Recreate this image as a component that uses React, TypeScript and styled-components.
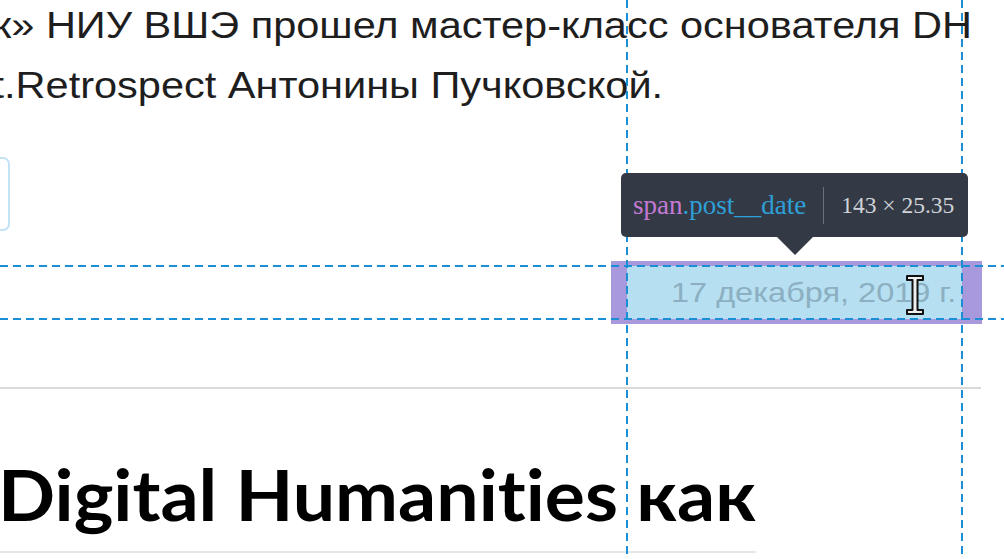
import React from "react";
import styled, { createGlobalStyle } from "styled-components";

const Global = createGlobalStyle`
  html, body { margin: 0; padding: 0; background: #ffffff; overflow: hidden; }
  #root { width: 1004px; height: 559px; }
`;

const Page = styled.div`
  position: relative;
  width: 1004px;
  height: 559px;
  overflow: hidden;
  background: #ffffff;
`;

const Column = styled.article`
  margin-left: -41px;
  width: 1023px;
  display: flex;
  flex-direction: column;
  align-items: flex-start;
`;

const Lead = styled.p`
  margin: -4px 0 0 -8px;
  font-family: "Liberation Sans", Arial, sans-serif;
  font-size: 36px;
  line-height: 60px;
  color: #1e1e1e;
  white-space: nowrap;
  transform: scaleX(1.153);
  transform-origin: 0 0;
`;

const Footer = styled.div`
  margin-top: 41px;
  width: 100%;
  display: flex;
  flex-direction: column;
`;

const ShareButton = styled.button`
  width: 51px;
  height: 74px;
  padding: 0;
  background: #ffffff;
  border: 2px solid #c4e2f6;
  border-radius: 7px;
`;

const DateRow = styled.div`
  margin-top: 30px;
  display: flex;
  justify-content: flex-end;
`;

const PaddingBox = styled.span`
  display: inline-flex;
  padding: 5px 20px 5px 16px;
  background: #a899dd;
`;

const ContentBox = styled.span`
  display: flex;
  align-items: center;
  width: 335px;
  height: 53px;
  padding-left: 44px;
  box-sizing: border-box;
  background: #b6dff2;
  overflow: hidden;
  white-space: nowrap;
`;

const DateText = styled.span`
  display: inline-block;
  font-family: "Liberation Sans", Arial, sans-serif;
  font-size: 28px;
  color: #8cafc1;
  transform: scaleX(1.16);
  transform-origin: 0 50%;
`;

const Divider = styled.hr`
  margin: 63px 0 0;
  width: 1022px;
  height: 2px;
  border: 0;
  background: #d9d9d9;
`;

const Heading = styled.h2`
  margin: 0 0 0 39px;
  padding: 60px 0 12px;
  display: inline-block;
  font-family: Lato, "Noto Sans", sans-serif;
  font-weight: 700;
  font-size: 70px;
  line-height: 90px;
  font-variant-ligatures: none;
  font-feature-settings: "liga" 0, "clig" 0;
  color: #000000;
  border-bottom: 2px solid #e6e6e6;
  white-space: nowrap;
  transform: scaleX(1.074);
  transform-origin: 0 0;
`;

const GuideV = styled.div<{ $x: number }>`
  position: absolute;
  top: 0;
  bottom: 0;
  left: ${(p) => p.$x}px;
  width: 2px;
  background: repeating-linear-gradient(
    to bottom,
    #1b8fd5 0 8px,
    transparent 8px 13px
  );
`;

const GuideH = styled.div<{ $y: number }>`
  position: absolute;
  left: 0;
  right: 0;
  top: ${(p) => p.$y}px;
  height: 2px;
  background: repeating-linear-gradient(
    to right,
    #1b8fd5 0 8px,
    transparent 8px 13px
  );
`;

const Tooltip = styled.div`
  position: absolute;
  left: 621px;
  top: 173px;
  width: 347px;
  height: 64px;
  box-sizing: border-box;
  padding: 0 13px 0 12px;
  display: flex;
  align-items: center;
  background: #343a45;
  border-radius: 5px;
  font-family: "Liberation Serif", "Times New Roman", serif;
  white-space: nowrap;

  &::after {
    content: "";
    position: absolute;
    left: 156px;
    top: 64px;
    border-left: 18px solid transparent;
    border-right: 18px solid transparent;
    border-top: 18px solid #343a45;
  }
`;

const Tag = styled.span`
  font-size: 27px;
  color: #c47ad4;
`;

const ClassName = styled.span`
  font-size: 27px;
  color: #2ea0d8;
`;

const Sep = styled.span`
  width: 1px;
  height: 37px;
  margin: 0 17px;
  background: #69707c;
`;

const Dims = styled.span`
  font-size: 23.5px;
  color: #cfd3d8;
`;

const Cursor = styled.svg`
  position: absolute;
  left: 905px;
  top: 274px;
`;

export default function App() {
  return (
    <Page>
      <Global />
      <Column>
        <Lead>
          «зк» НИУ ВШЭ прошел мастер-класс основателя DH
          <br />
          Art.Retrospect Антонины Пучковской.
        </Lead>
        <Footer>
          <ShareButton aria-label="Поделиться" />
          <DateRow>
            <PaddingBox>
              <ContentBox>
                <DateText>17 декабря, 2019 г.</DateText>
              </ContentBox>
            </PaddingBox>
          </DateRow>
        </Footer>
        <Divider />
        <Heading>Digital Humanities как</Heading>
      </Column>

      <GuideV $x={626} />
      <GuideV $x={961} />
      <GuideH $y={265} />
      <GuideH $y={318} />

      <Tooltip>
        <Tag>span</Tag>
        <ClassName>.post__date</ClassName>
        <Sep />
        <Dims>143 × 25.35</Dims>
      </Tooltip>

      <Cursor width="20" height="42" viewBox="0 0 20 42">
        <path
          d="M2 2 H18 V6 H12.5 V36 H18 V40 H2 V36 H7.5 V6 H2 Z"
          fill="#eeeeee"
          stroke="#111111"
          strokeWidth="2"
          strokeLinejoin="round"
        />
      </Cursor>
    </Page>
  );
}
